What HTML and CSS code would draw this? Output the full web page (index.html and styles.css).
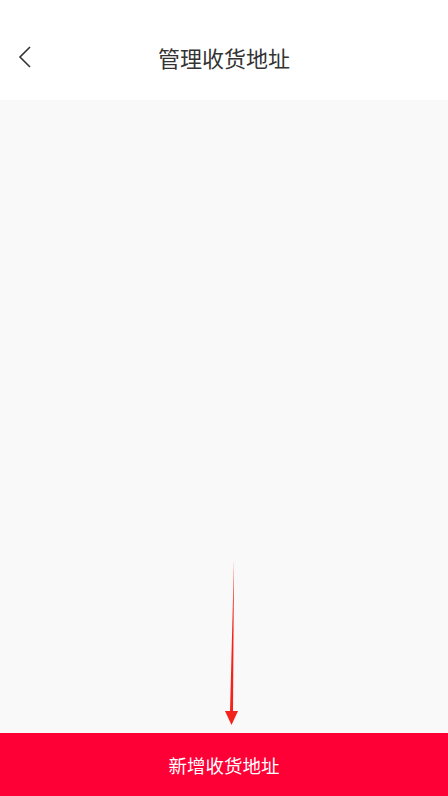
FILE: index.html
```html
<!DOCTYPE html>
<html lang="zh-CN">
<head>
    <meta charset="UTF-8">
    <meta name="viewport" content="width=device-width, initial-scale=1.0">
    <title>管理收货地址</title>
    <link rel="stylesheet" href="styles.css">
</head>
<body>
    <div class="page">
        <div class="header">
            <span class="back">
                <svg width="14" height="22" viewBox="0 0 14 22">
                    <path d="M12 1 L2 11 L12 21" fill="none" stroke="#333" stroke-width="1.6"/>
                </svg>
            </span>
            <p class="title">管理收货地址</p>
        </div>
        <div class="content">
            <svg class="arrow" width="20" height="170" viewBox="0 0 20 170">
                <polygon points="13,0 12,152 9,152" fill="#f2231c"/>
                <polygon points="4,151 17,151 10.5,165" fill="#f2231c"/>
            </svg>
        </div>
        <div class="add-btn">新增收货地址</div>
    </div>
</body>
</html>
```

FILE: styles.css
```css
body{
    margin: 0;
    font-family: "Noto Sans CJK SC", "Noto Sans", sans-serif;
}
.page{
    width: 448px;
    height: 796px;
    display: flex;
    flex-direction: column;
    background-color: #f9f9f9;
}
.header{
    height: 100px;
    background-color: #fff;
    display: flex;
    align-items: center;
    justify-content: center;
    position: relative;
    padding-top: 14px;
    box-sizing: border-box;
}
.back{
    position: absolute;
    left: 18px;
    top: 46px;
}
.title{
    margin: 0;
    font-size: 22px;
    color: #333;
}
.content{
    flex: 1;
    position: relative;
}
.arrow{
    position: absolute;
    left: 221px;
    top: 460px;
}
.add-btn{
    height: 63px;
    background-color: #ff0036;
    color: #fff;
    font-size: 18.5px;
    display: flex;
    align-items: center;
    justify-content: center;
}
```
